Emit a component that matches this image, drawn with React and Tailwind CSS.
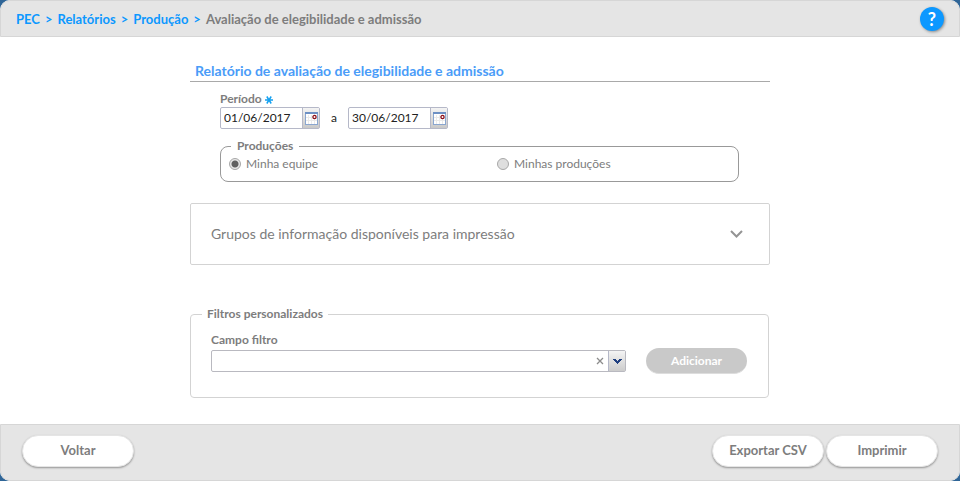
import React, { useState } from 'react';

const breadcrumbs = ['PEC', 'Relatórios', 'Produção'];

const productions = [
  { value: 'team', label: 'Minha equipe' },
  { value: 'own', label: 'Minhas produções' }
];

const CalendarIcon = () => (
  <svg width="13" height="13" viewBox="0 0 13 13" aria-hidden="true">
    <g shapeRendering="crispEdges">
      <rect x="0" y="0" width="13" height="13" fill="#8aa6d0" />
      <rect x="0" y="0" width="13" height="2" fill="#6d90c4" />
      <rect x="1" y="2" width="11" height="10" fill="#ffffff" />
      <path d="M1 5.5h11M1 8.5h11M3.5 3v9M6.5 3v9M9.5 3v9" stroke="#eaeaea" fill="none" />
    </g>
    <circle cx="9.5" cy="5" r="1.6" fill="#ffffff" stroke="#8b0f1a" strokeWidth="1.3" />
  </svg>
);

const DateField = ({ id, label, defaultValue }) => (
  <div className="flex h-[22px] w-[100px] rounded-[2px] border border-[#b5b8c8] bg-white">
    <input
      id={id}
      type="text"
      aria-label={label}
      defaultValue={defaultValue}
      className="min-w-0 flex-1 pl-[3px] text-xs leading-5 text-[#222222] outline-none"
    />
    <button
      type="button"
      aria-label="Abrir calendário"
      className="flex w-[17px] items-center justify-center border-l border-[#b5b8c8] bg-linear-to-b from-[#f4f4f4] to-[#c8c8c8]"
    >
      <CalendarIcon />
    </button>
  </div>
);

const FooterButton = ({ children }) => (
  <button
    type="button"
    className="h-8 w-28 rounded-full border border-[#e5e5e5] bg-white text-[13px] font-bold text-[#7d7d7d] shadow-[0_1px_2px_rgba(0,0,0,0.35)]"
  >
    {children}
  </button>
);

const App = () => {
  const [production, setProduction] = useState('team');

  return (
    <div className="min-h-screen bg-[#2f6597] font-['Lato',sans-serif] text-xs text-[#7d7d7d]">
      <div className="flex min-h-screen flex-col overflow-hidden rounded-[10px] bg-white">
        {/* Breadcrumb bar */}
        <header className="flex h-[37px] items-center justify-between rounded-t-[10px] border border-[#d6d6d6] bg-[#e5e5e5] px-[15px]">
          <nav className="flex gap-[5px] text-[13px] leading-5 font-bold">
            {breadcrumbs.map((item) => (
              <React.Fragment key={item}>
                <a href="#" className="text-[#0c98ff]">{item}</a>
                <span className="text-[#0c98ff]">&gt;</span>
              </React.Fragment>
            ))}
            <span>Avaliação de elegibilidade e admissão</span>
          </nav>
          <button
            type="button"
            aria-label="Ajuda"
            className="size-6 rounded-full bg-[#0c98ff] text-lg leading-6 font-bold text-white shadow-[1px_1px_3px_rgba(0,0,0,0.4)]"
          >
            ?
          </button>
        </header>

        {/* Report form */}
        <main className="mx-auto w-full max-w-[580px] flex-1 pt-6 pb-6">
          <h1 className="border-b border-[#a9a9a9] pl-[5px] text-sm leading-5 font-bold text-[#4a9cf8]">
            Relatório de avaliação de elegibilidade e admissão
          </h1>

          <div className="pt-[9px] pr-[31px] pl-[30px]">
            <label htmlFor="start" className="flex items-center gap-[3px] leading-4 font-bold">
              Período
              <svg width="8" height="8" viewBox="0 0 8 8" stroke="#14a0f0" strokeWidth="1.5" className="mt-[2px]" aria-hidden="true">
                <path d="M0 4h8M1.8 0.5l4.4 7M6.2 0.5l-4.4 7" />
              </svg>
            </label>
            <div className="flex items-center">
              <DateField id="start" label="Data inicial" defaultValue="01/06/2017" />
              <span className="w-7 text-center text-[#222222]">a</span>
              <DateField id="end" label="Data final" defaultValue="30/06/2017" />
            </div>

            <fieldset className="mt-[9px] min-w-0 rounded-[8px] border border-[#999999] px-2 pb-[7px]">
              <legend className="ml-[2px] px-[6px] leading-4 font-bold">Produções</legend>
              <div className="flex">
                {productions.map((item) => (
                  <label key={item.value} className="flex min-w-0 basis-[268px] items-center gap-[5px] leading-5 first:shrink-0">
                    <input
                      type="radio"
                      name="production"
                      value={item.value}
                      checked={production === item.value}
                      onChange={() => setProduction(item.value)}
                      className="size-3 appearance-none rounded-full border border-[#a8a8a8] bg-[#dedede] checked:bg-[radial-gradient(circle,#606060_3px,#e8e8e8_4px)]"
                    />
                    {item.label}
                  </label>
                ))}
              </div>
            </fieldset>
          </div>

          <button
            type="button"
            className="mt-[21px] flex w-full items-center justify-between rounded-[2px] border border-[#d3d3d3] py-5 pr-[26px] pl-5 text-sm leading-5"
          >
            Grupos de informação disponíveis para impressão
            <svg width="13" height="8" viewBox="0 0 13 8" fill="none" stroke="#949494" strokeWidth="2" aria-hidden="true">
              <path d="M1 1l5.5 5.5L12 1" />
            </svg>
          </button>

          <fieldset className="mt-10 mr-px min-w-0 rounded-[4px] border border-[#d3d3d3] px-5 pt-[9px] pb-[23px]">
            <legend className="-ml-[9px] px-[5px] leading-[18px] font-bold">Filtros personalizados</legend>
            <label htmlFor="filter" className="block leading-4 font-bold">Campo filtro</label>
            <div className="flex items-center gap-5">
              <div className="relative w-[415px]">
                <select
                  id="filter"
                  defaultValue=""
                  className="block h-[22px] w-full appearance-none rounded-[2px] border border-[#b9b9c0] bg-white pr-8 pl-1"
                >
                  <option value=""></option>
                </select>
                <button type="button" aria-label="Limpar" className="absolute inset-y-0 right-[22px]">
                  <svg width="8" height="8" viewBox="0 0 8 8" stroke="#8c8c8c" strokeWidth="1.3" aria-hidden="true">
                    <path d="M1 1l6 6M7 1L1 7" />
                  </svg>
                </button>
                <span className="pointer-events-none absolute inset-y-px right-px flex w-[17px] items-center justify-center border-l border-[#b5b8c8] bg-linear-to-b from-[#f4f4f4] to-[#cccccc]">
                  <svg width="9" height="5" viewBox="0 0 9 5" fill="#1f3f80" shapeRendering="crispEdges" aria-hidden="true">
                    <path d="M0 0h3v1h1v1h1V1h1V0h3v1H8v1H7v1H6v1H5v1H4V4H3V3H2V2H1V1H0z" />
                  </svg>
                </span>
              </div>
              <button
                type="button"
                disabled
                className="h-[26px] w-[101px] rounded-full border-b border-[#dddddd] bg-[#c9c9c9] font-bold text-white"
              >
                Adicionar
              </button>
            </div>
          </fieldset>
        </main>

        {/* Actions */}
        <footer className="flex justify-between rounded-b-[10px] border border-[#d6d6d6] bg-[#e5e5e5] px-[21px] pt-[10px] pb-[13px]">
          <FooterButton>Voltar</FooterButton>
          <div className="flex gap-[2px]">
            <FooterButton>Exportar CSV</FooterButton>
            <FooterButton>Imprimir</FooterButton>
          </div>
        </footer>
      </div>
    </div>
  );
};

export default App;
